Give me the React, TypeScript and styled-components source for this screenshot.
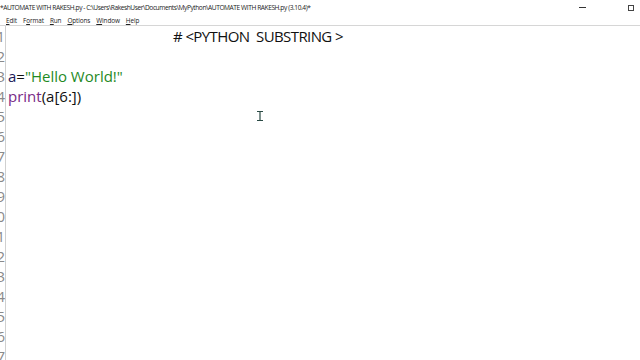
import React from "react";
import styled, { createGlobalStyle } from "styled-components";

const Global = createGlobalStyle`
  html, body { margin: 0; padding: 0; background: #fff; }
  body { width: 640px; height: 360px; overflow: hidden; font-family: "Open Sans", "Noto Sans", sans-serif; }
`;

const Window = styled.div`
  width: 640px;
  height: 360px;
  display: flex;
  flex-direction: column;
  background: #fff;
  overflow: hidden;
`;

const TitleBar = styled.div`
  height: 15px;
  flex-shrink: 0;
  display: flex;
  align-items: center;
  justify-content: space-between;
`;

const TitleText = styled.div`
  font-size: 6.6px;
  color: #222;
  white-space: nowrap;
  letter-spacing: -0.42px;
`;

const Controls = styled.div`
  display: flex;
  align-items: center;
  gap: 42px;
  margin-right: 6px;
`;

const MinIcon = styled.div`
  width: 7px;
  height: 1px;
  background: #333;
`;

const MaxIcon = styled.div`
  width: 4px;
  height: 4px;
  border: 1px solid #444;
`;

const MenuBar = styled.div`
  height: 10px;
  flex-shrink: 0;
  display: flex;
  align-items: center;
  gap: 6px;
  padding-left: 6px;
  font-size: 6.4px;
  color: #222;
  letter-spacing: -0.1px;
  border-bottom: 1px solid #d6d6d6;
`;

const MenuItem = styled.span`
  u { text-decoration: underline; }
`;

const Editor = styled.div`
  flex: 1;
  min-height: 0;
  overflow: hidden;
  display: flex;
`;

const Gutter = styled.div`
  width: 5px;
  overflow: hidden;
  border-right: 1px solid #d0d0d0;
  display: flex;
  flex-direction: column;
  align-items: flex-end;
`;

const LineNo = styled.div`
  height: 20px;
  line-height: 20px;
  font-size: 15px;
  color: #8a8a8a;
  white-space: nowrap;
  text-align: right;
  flex-shrink: 0;
`;

const Code = styled.div`
  flex: 1;
  position: relative;
  padding-left: 2px;
  font-size: 15px;
  color: #111;
`;

const Line = styled.div<{ $center?: boolean }>`
  height: 20px;
  line-height: 20px;
  white-space: pre;
  ${(p) => (p.$center ? "padding-left: 165px; letter-spacing: -0.6px;" : "")}
`;

const Str = styled.span`
  color: #1f8a1f;
`;
const Builtin = styled.span`
  color: #7a2a86;
`;
const Ident = styled.span`
  color: #1a1a5a;
`;

const Cursor = styled.div`
  position: absolute;
  left: 251px;
  top: 79px;
  width: 6px;
  height: 10px;
`;

export default function App() {
  const nums = Array.from({ length: 17 }, (_, i) => i + 1);
  return (
    <>
      <Global />
      <Window>
        <TitleBar>
          <TitleText>
            *AUTOMATE WITH RAKESH.py - C:\Users\RakeshUser\Documents\MyPython\AUTOMATE WITH RAKESH.py (3.10.4)*
          </TitleText>
          <Controls>
            <MinIcon />
            <MaxIcon />
          </Controls>
        </TitleBar>
        <MenuBar>
          <MenuItem><u>E</u>dit</MenuItem>
          <MenuItem>F<u>o</u>rmat</MenuItem>
          <MenuItem><u>R</u>un</MenuItem>
          <MenuItem><u>O</u>ptions</MenuItem>
          <MenuItem><u>W</u>indow</MenuItem>
          <MenuItem><u>H</u>elp</MenuItem>
        </MenuBar>
        <Editor>
          <Gutter>
            {nums.map((n) => (
              <LineNo key={n}>{n}</LineNo>
            ))}
          </Gutter>
          <Code>
            <Line $center># &lt;PYTHON  SUBSTRING &gt;</Line>
            <Line> </Line>
            <Line>
              <Ident>a</Ident>=<Str>"Hello World!"</Str>
            </Line>
            <Line>
              <Builtin>print</Builtin>(a[6:])
            </Line>
            <Cursor>
              <svg width="6" height="10" viewBox="0 0 6 10">
                <path d="M0 0.5H6M0 9.5H6M3 0.5V9.5" stroke="#2a4a44" strokeWidth="1.2" fill="none" />
              </svg>
            </Cursor>
          </Code>
        </Editor>
      </Window>
    </>
  );
}
